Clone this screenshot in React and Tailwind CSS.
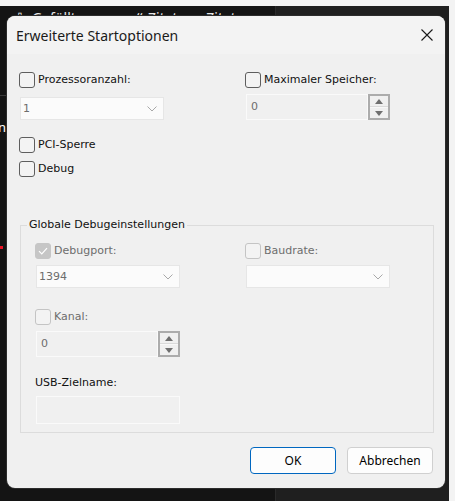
const sys = "font-['DejaVu_Sans',sans-serif] text-[11px] leading-[14px]";

function CheckBox({ label, checked, disabled, className = '' }) {
  return (
    <div className={`flex items-center ${className}`}>
      <span
        className={`w-[16px] h-[16px] rounded-[3px] border flex items-center justify-center ${
          checked ? 'bg-[#c6c6c6] border-[#c6c6c6]' : disabled ? 'border-[#c4c4c4] bg-[#f3f3f3]' : 'border-[#5e5e5e] bg-[#f3f3f3]'
        }`}
      >
        {checked && (
          <svg width="10" height="8" viewBox="0 0 10 8" fill="none">
            <path d="M1 4.2 L3.8 7 L9 1.2" stroke="#fff" strokeWidth="1.2" />
          </svg>
        )}
      </span>
      <span className={`ml-[3px] ${sys} ${disabled ? 'text-[#6d6d6d]' : 'text-[#111]'}`}>{label}</span>
    </div>
  );
}

function Combo({ value, className = '' }) {
  return (
    <div className={`w-[144px] h-[23px] bg-[#fbfbfb] border border-[#e6e6e6] flex items-center justify-between pl-[2px] pr-[6px] ${className}`}>
      <span className={`${sys} text-[#6d6d6d]`}>{value}</span>
      <svg width="10" height="6" viewBox="0 0 10 6" fill="none">
        <path d="M0.5 0.5 L5 5 L9.5 0.5" stroke="#a8a8a8" strokeWidth="1" />
      </svg>
    </div>
  );
}

function Spin({ value, className = '' }) {
  return (
    <div className={`flex w-[144px] h-[26px] ${className}`}>
      <div className="flex-1 bg-[#f0f0f0] border border-[#fafafa] flex items-center pl-[4px]">
        <span className={`${sys} text-[#6d6d6d]`}>{value}</span>
      </div>
      <div className="w-[22px] border-2 border-[#acacac] flex flex-col bg-[#f0f0f0]">
        <div className="flex-1 flex items-center justify-center border-b border-[#dadada]">
          <svg width="8" height="5" viewBox="0 0 8 5"><path d="M0 5 L4 0 L8 5 Z" fill="#6f6f6f" /></svg>
        </div>
        <div className="flex-1 flex items-center justify-center border-t border-[#f8f8f8]">
          <svg width="8" height="5" viewBox="0 0 8 5"><path d="M0 0 L8 0 L4 5 Z" fill="#6f6f6f" /></svg>
        </div>
      </div>
    </div>
  );
}

export default function App() {
  return (
    <div className="relative w-[455px] h-[501px] overflow-hidden bg-[#f3f3f3]">
      {/* desktop behind the dialog */}
      <div className="h-[6px]" />
      <div className="flex w-[449px] h-[495px]">
        <div className="w-[275px] bg-[#141414] relative overflow-hidden">
          <div className="h-[10px] overflow-hidden flex items-start pl-[14px] pt-[4px] gap-[6px] text-[#e8e8e8] text-[14px] leading-[16px] font-['Noto_Sans',sans-serif]">
            <span>⇩</span>
            <span>Gefülltes</span>
            <span className="ml-[40px]">❝ Zitat</span>
            <span className="ml-[6px]">▭ Zitat</span>
          </div>
          <div className="absolute left-0 top-[89px] w-[8px] h-px bg-[#3a3a3a]" />
          <div className="absolute left-[-2px] top-[112px] text-white text-[13px] font-['Noto_Sans',sans-serif]">n</div>
          <div className="absolute left-0 top-[240px] w-[3px] h-[3px] bg-[#e81123]" />
        </div>
        <div className="flex-1 bg-[#1f1f1f] border-l border-[#2a2a2a]" />
      </div>

      {/* dialog */}
      <div className="absolute left-[7px] top-[16px] w-[438px] h-[472px] rounded-[8px] bg-[#f0f0f0] overflow-hidden shadow-[0_0_0_1px_#2c2c2c] flex flex-col">
        <div className="h-[38px] bg-[#f3f3f3] flex items-center justify-between pl-[9px] pr-[11px] shrink-0">
          <span className="font-['Noto_Sans',sans-serif] text-[14px] text-[#1a1a1a] mt-[1px]">Erweiterte Startoptionen</span>
          <svg width="12" height="12" viewBox="0 0 12 12" className="mr-[1px]">
            <path d="M0.5 0.5 L11.5 11.5 M11.5 0.5 L0.5 11.5" stroke="#1a1a1a" strokeWidth="1.1" />
          </svg>
        </div>

        <div className="flex-1 pl-[12px] pr-[12px] pt-[18px]">
          <div className="flex">
            <div className="w-[226px]">
              <CheckBox label="Prozessoranzahl:" />
              <Combo value="1" className="mt-[9px] ml-[1px]" />
              <CheckBox label="PCI-Sperre" className="mt-[17px]" />
              <CheckBox label="Debug" className="mt-[8px]" />
            </div>
            <div>
              <CheckBox label="Maximaler Speicher:" />
              <Spin value="0" className="mt-[6px] ml-[1px]" />
            </div>
          </div>

          <fieldset className="mt-[41px] ml-[1px] w-[414px] h-[215px] border border-[#dcdcdc] px-[14px]">
            <legend className={`${sys} text-[#111] ml-[-8px] px-[2px]`}>Globale Debugeinstellungen</legend>
            <div className="flex mt-[11px]">
              <div className="w-[210px]">
                <CheckBox label="Debugport:" checked disabled />
                <Combo value="1394" className="mt-[6px] ml-[1px]" />
                <CheckBox label="Kanal:" disabled className="mt-[21px]" />
                <Spin value="0" className="mt-[6px] ml-[1px]" />
                <div className={`${sys} text-[#111] mt-[19px]`}>USB-Zielname:</div>
                <div className="mt-[6px] ml-[1px] w-[144px] h-[28px] bg-[#f0f0f0] border border-[#fafafa]" />
              </div>
              <div>
                <CheckBox label="Baudrate:" disabled />
                <Combo value="" className="mt-[6px] ml-[1px]" />
              </div>
            </div>
          </fieldset>

          <div className="flex justify-end gap-[11px] mt-[14px] font-['Noto_Sans',sans-serif] text-[12px] text-black">
            <button className="w-[86px] h-[27px] bg-[#fdfdfd] border border-[#0067c0] rounded-[4px]">OK</button>
            <button className="w-[86px] h-[27px] bg-[#fdfdfd] border border-[#d0d0d0] rounded-[4px]">Abbrechen</button>
          </div>
        </div>
      </div>
    </div>
  );
}
